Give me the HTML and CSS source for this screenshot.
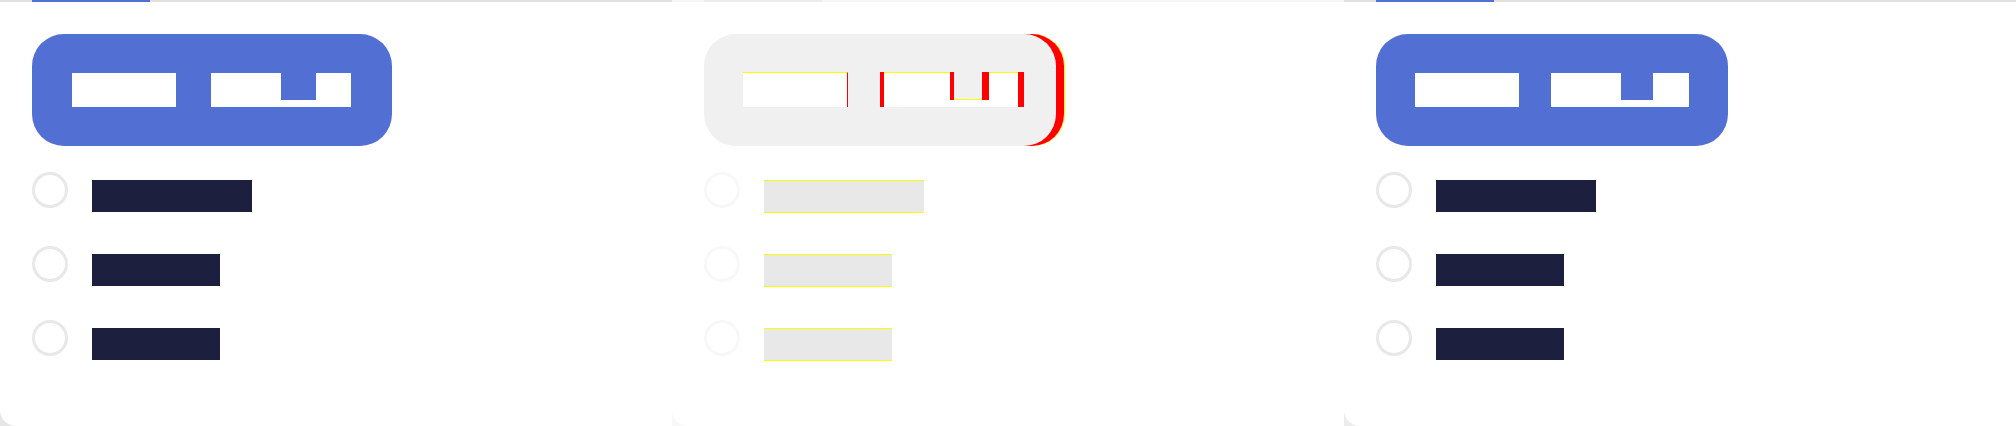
FILE: index.html
```html
<!DOCTYPE html>
<html lang="en">
<head>
<meta charset="utf-8">
<title>Follow-up states</title>
<link rel="stylesheet" href="styles.css">
</head>
<body>
<main class="row">
  <section class="panel panel-a">
    <div class="card">
      <div class="tabbar"><div class="tab-indicator"></div></div>
      <div class="content">
        <div class="btn" aria-label="Follow up">
          <span class="w1"></span>
          <span class="w2"><span class="p70"></span><span class="notch n35"><span class="low"></span></span><span class="p35"></span></span>
        </div>
        <ul class="list">
          <li class="item"><span class="radio"></span><span class="bar w160"></span></li>
          <li class="item"><span class="radio"></span><span class="bar w128"></span></li>
          <li class="item"><span class="radio"></span><span class="bar w128"></span></li>
        </ul>
      </div>
    </div>
  </section>

  <section class="panel panel-b">
    <div class="card">
      <div class="tabbar"><div class="tab-indicator"></div></div>
      <div class="content">
        <div class="diff-frame">
          <div class="btn" aria-label="Follow up">
            <span class="w1"></span>
            <span class="w2">
              <span class="red full r4"></span>
              <span class="wp top66"></span>
              <span class="stub r4"><span class="red-top"></span><span class="low"></span></span>
              <span class="stub n28"><span class="gray-top"></span><span class="low"></span></span>
              <span class="stub r7"><span class="red-top"></span><span class="low"></span></span>
              <span class="wp top29"></span>
              <span class="red full r6"></span>
            </span>
          </div>
        </div>
        <ul class="list">
          <li class="item"><span class="radio"></span><span class="bar w160"></span></li>
          <li class="item"><span class="radio"></span><span class="bar w128"></span></li>
          <li class="item"><span class="radio"></span><span class="bar w128"></span></li>
        </ul>
      </div>
    </div>
  </section>

  <section class="panel panel-c">
    <div class="card">
      <div class="tabbar"><div class="tab-indicator"></div></div>
      <div class="content">
        <div class="btn" aria-label="Follow up">
          <span class="w1"></span>
          <span class="w2"><span class="p70"></span><span class="notch n32"><span class="low"></span></span><span class="p36"></span></span>
        </div>
        <ul class="list">
          <li class="item"><span class="radio"></span><span class="bar w160"></span></li>
          <li class="item"><span class="radio"></span><span class="bar w128"></span></li>
          <li class="item"><span class="radio"></span><span class="bar w128"></span></li>
        </ul>
      </div>
    </div>
  </section>
</main>
</body>
</html>
```

FILE: styles.css
```css
* { box-sizing: border-box; }

html, body {
  margin: 0;
  padding: 0;
  width: 2016px;
  height: 426px;
  overflow: hidden;
  background: #ffffff;
  font-family: "Liberation Sans", Arial, sans-serif;
}

.row {
  display: flex;
  width: 2016px;
  height: 426px;
}

.panel {
  width: 672px;
  height: 426px;
  flex: none;
}

.panel-a { background: #e6e6e6; }
.panel-b { background: #f8f8f8; }
.panel-c { background: #ececec; }

.card {
  height: 100%;
  background: #ffffff;
  border-bottom-left-radius: 16px;
}

/* tab bar */
.tabbar {
  height: 2px;
  background: #e0e0e0;
}
.tab-indicator {
  margin-left: 32px;
  width: 118px;
  height: 2px;
  background: #5270d4;
}
.panel-b .tabbar { background: #f6f6f6; }
.panel-b .tab-indicator { background: #ececec; }

.content {
  padding: 32px 0 0 32px;
}

/* primary button */
.btn {
  display: flex;
  gap: 35px;
  width: 360px;
  height: 112px;
  padding: 39px 0 0 40px;
  border-radius: 32px;
  background: #5270d4;
}
.panel-c .btn {
  width: 352px;
  gap: 32px;
  padding-left: 39px;
}

.w1 {
  display: block;
  width: 104px;
  height: 34px;
  background: #ffffff;
}
.w2 {
  display: flex;
  align-items: flex-end;
  height: 34px;
}
.p70, .p35, .p36 {
  display: block;
  height: 34px;
  background: #ffffff;
}
.p70 { width: 70px; }
.p35 { width: 35px; }
.p36 { width: 36px; }

.notch {
  display: flex;
  align-items: flex-end;
  height: 34px;
}
.n35 { width: 35px; }
.n32 { width: 32px; }
.low {
  display: block;
  width: 100%;
  height: 7px;
  background: #ffffff;
}

/* list */
.list {
  list-style: none;
  margin: 26px 0 0;
  padding: 0;
  display: flex;
  flex-direction: column;
  gap: 38px;
}
.item {
  display: flex;
  align-items: flex-start;
  gap: 24px;
  height: 36px;
}
.radio {
  display: block;
  width: 36px;
  height: 36px;
  border-radius: 50%;
  border: 3px solid #e8e8e8;
  flex: none;
}
.bar {
  display: block;
  height: 32px;
  margin-top: 8px;
  background: #1c1f3d;
}
.w160 { width: 160px; }
.w128 { width: 128px; }

/* diff panel */
.diff-frame {
  width: 360px;
  height: 112px;
  border-radius: 32px;
  background: linear-gradient(to right, transparent 50%, #ff0000 50%);
  box-shadow: 1px 0 0 0 #ffff00;
}
.panel-b .btn {
  width: 352px;
  background: #f0f0f0;
  padding: 38px 0 0 39px;
  gap: 32px;
}
.panel-b .w1 {
  height: 35px;
  width: 105px;
  border-top: 1px solid #ffff00;
  border-right: 1px solid #ff0000;
}
.panel-b .w2 {
  height: 35px;
  align-items: stretch;
}
.red { display: block; background: #ff0000; }
.full { height: 35px; }
.r4 { width: 4px; }
.r6 { width: 6px; }
.r7 { width: 7px; }
.n28 { width: 28px; }
.wp {
  display: block;
  height: 35px;
  background: #ffffff;
  border-top: 1px solid #ffff00;
}
.top66 { width: 66px; }
.top29 { width: 29px; }
.stub {
  display: flex;
  flex-direction: column;
  height: 35px;
}
.red-top {
  display: block;
  height: 28px;
  background: #ff0000;
}
.gray-top {
  display: block;
  height: 28px;
  background: #f0f0f0;
  border-bottom: 1px solid #ffff00;
}
.stub .low { height: 7px; }

.panel-b .radio { border-color: #f8f8f8; }
.panel-b .bar {
  height: 33px;
  background: #e8e8e8;
  border-top: 1px solid #ffff00;
  border-bottom: 1px solid #ffff00;
}
```
